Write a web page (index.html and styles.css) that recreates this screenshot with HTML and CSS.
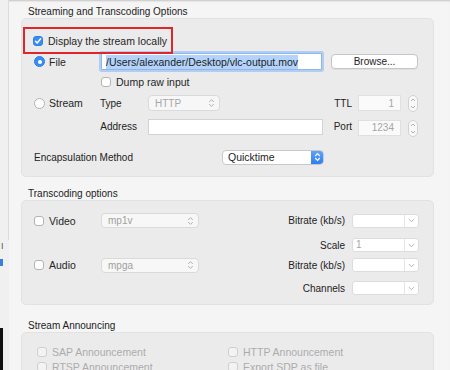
FILE: index.html
```html
<!DOCTYPE html>
<html lang="en">

<head>
  <meta charset="UTF-8">
  <title>Streaming and Transcoding Options</title>
  <link rel="stylesheet" href="styles.css">
</head>

<body>
  <div class="screen">
    <div class="side">
      <div class="side-top"></div>
      <span class="side-mark">I</span>
      <span class="side-blue"></span>
      <span class="side-dark"></span>
    </div>

    <div class="panel">
      <!-- Streaming -->
      <div class="group-title first">Streaming and Transcoding Options</div>
      <div class="group box-out">
        <div class="highlight">
          <span class="cb on"><svg width="8" height="8" viewBox="0 0 8 8"><path d="M1.5 4.2 L3.2 6 L6.6 1.8" fill="none" stroke="#fff" stroke-width="1.5" stroke-linecap="round" stroke-linejoin="round"/></svg></span>
          <span>Display the stream locally</span>
        </div>

        <div class="out-grid">
          <div class="choice"><span class="rb on"></span>File</div>
          <div class="field focus c23"><span class="sel">/Users/alexander/Desktop/vlc-output.mov</span></div>
          <div class="btn c46">Browse...</div>

          <div class="choice c23 dump"><span class="cb"></span>Dump raw input</div>

          <div class="choice c1"><span class="rb"></span>Stream</div>
          <div class="lbl">Type</div>
          <div class="popup off http">HTTP
            <svg class="updown" width="7" height="10" viewBox="0 0 7 10"><path d="M1.2 4 L3.5 1.6 L5.8 4 M1.2 6 L3.5 8.4 L5.8 6" fill="none" stroke="#b4b4b4" stroke-width="1"/></svg>
          </div>
          <div class="lbl right">TTL</div>
          <div class="field num off">1</div>
          <div class="stepper"><svg width="6" height="13" viewBox="0 0 6 13"><path d="M1 4 L3 2 L5 4 M1 9 L3 11 L5 9" fill="none" stroke="#a8a8a8" stroke-width="0.9"/></svg></div>

          <div class="lbl right addr c2">Address</div>
          <div class="field addr-field"></div>
          <div class="lbl right">Port</div>
          <div class="field num off port">1234</div>
          <div class="stepper port"><svg width="6" height="13" viewBox="0 0 6 13"><path d="M1 4 L3 2 L5 4 M1 9 L3 11 L5 9" fill="none" stroke="#a8a8a8" stroke-width="0.9"/></svg></div>

          <div class="lbl c12">Encapsulation Method</div>
          <div class="popup blue-pop">Quicktime
            <span class="pop-btn"><svg width="7" height="10" viewBox="0 0 7 10"><path d="M1.2 4 L3.5 1.6 L5.8 4 M1.2 6 L3.5 8.4 L5.8 6" fill="none" stroke="#fff" stroke-width="1.1"/></svg></span>
          </div>
        </div>
      </div>

      <!-- Transcoding -->
      <div class="group-title">Transcoding options</div>
      <div class="group box-trans">
        <div class="trans-grid">
          <div class="choice r1"><span class="cb"></span>Video</div>
          <div class="popup off codec r1">mp1v
            <svg class="updown" width="7" height="10" viewBox="0 0 7 10"><path d="M1.2 4 L3.5 1.6 L5.8 4 M1.2 6 L3.5 8.4 L5.8 6" fill="none" stroke="#b4b4b4" stroke-width="1"/></svg>
          </div>
          <div class="lbl right r1">Bitrate (kb/s)</div>
          <div class="combo r1"><span class="combo-text"></span><span class="combo-arr"><svg width="7" height="5" viewBox="0 0 7 5"><path d="M1 1.2 L3.5 3.7 L6 1.2" fill="none" stroke="#b0b0b0" stroke-width="1"/></svg></span></div>

          <div class="lbl right r2">Scale</div>
          <div class="combo r2"><span class="combo-text off">1</span><span class="combo-arr"><svg width="7" height="5" viewBox="0 0 7 5"><path d="M1 1.2 L3.5 3.7 L6 1.2" fill="none" stroke="#b0b0b0" stroke-width="1"/></svg></span></div>

          <div class="choice r3"><span class="cb"></span>Audio</div>
          <div class="popup off codec r3">mpga
            <svg class="updown" width="7" height="10" viewBox="0 0 7 10"><path d="M1.2 4 L3.5 1.6 L5.8 4 M1.2 6 L3.5 8.4 L5.8 6" fill="none" stroke="#b4b4b4" stroke-width="1"/></svg>
          </div>
          <div class="lbl right r3">Bitrate (kb/s)</div>
          <div class="combo r3"><span class="combo-text"></span><span class="combo-arr"><svg width="7" height="5" viewBox="0 0 7 5"><path d="M1 1.2 L3.5 3.7 L6 1.2" fill="none" stroke="#b0b0b0" stroke-width="1"/></svg></span></div>

          <div class="lbl right r4">Channels</div>
          <div class="combo r4"><span class="combo-text"></span><span class="combo-arr"><svg width="7" height="5" viewBox="0 0 7 5"><path d="M1 1.2 L3.5 3.7 L6 1.2" fill="none" stroke="#b0b0b0" stroke-width="1"/></svg></span></div>
        </div>
      </div>

      <!-- Announcing -->
      <div class="group-title ann">Stream Announcing</div>
      <div class="group box-ann">
        <div class="ann-grid">
          <div class="choice off"><span class="cb dim"></span>SAP Announcement</div>
          <div class="choice off"><span class="cb dim"></span>HTTP Announcement</div>
          <div class="choice off"><span class="cb dim"></span>RTSP Announcement</div>
          <div class="choice off"><span class="cb dim"></span>Export SDP as file</div>
        </div>
      </div>
    </div>
  </div>
</body>

</html>
```

FILE: styles.css
```css
/* macOS style options sheet */
* {
  box-sizing: border-box;
}

body {
  margin: 0;
  background-color: #f5f5f5;
  font-family: "Liberation Sans", Arial, sans-serif;
  font-size: 10px;
  color: #262626;
}

.screen {
  display: flex;
  height: 370px;
  overflow: hidden;
  box-shadow: inset 0 2px 2px -1px rgba(0, 0, 0, 0.2);
}

/* strip of the window behind */
.side {
  width: 9px;
  flex: none;
  display: flex;
  flex-direction: column;
  background-color: #f0f0f0;
}

.side-top {
  height: 240px;
  border-right: 1px solid #dcdcdc;
}

.side-mark {
  height: 12px;
  padding-left: 1px;
  font-size: 9px;
  line-height: 12px;
  color: #555;
}

.side-blue {
  width: 3px;
  height: 7px;
  margin-top: 7px;
  background-color: #3a7fe0;
}

.side-dark {
  width: 3px;
  height: 42px;
  margin-top: auto;
  background-color: #111;
}

.panel {
  width: 413px;
  margin-left: 12px;
  flex: none;
}

.group-title {
  height: 23px;
  padding-left: 7px;
  display: flex;
  align-items: flex-end;
  line-height: 13px;
  color: #222;
}

.group-title.first {
  height: 18px;
  align-items: flex-start;
  padding-top: 5px;
}

.group-title.ann {
  height: 27px;
}

.group {
  background-color: #ebebeb;
  border: 1px solid #e2e2e2;
  border-radius: 5px;
}

.box-out {
  height: 159px;
}

.box-trans {
  height: 105px;
}

.box-ann {
  height: 60px;
}

/* red annotation */
.highlight {
  width: 150px;
  height: 27px;
  margin: 8px 0 0 1px;
  border: 2px solid #e0252b;
  display: flex;
  align-items: center;
  gap: 5px;
  padding-left: 8px;
  white-space: nowrap;
  font-size: 10.5px;
  position: relative;
  z-index: 1;
}

.cb {
  width: 10px;
  height: 10px;
  flex: none;
  border: 1px solid #b3b3b3;
  border-radius: 3px;
  background-color: #fff;
  display: flex;
  align-items: center;
  justify-content: center;
}

.cb.on {
  background-color: #3a8bf1;
  border-color: #2f7fe6;
}

.cb.dim {
  border-color: #cfcfcf;
  background-color: #f3f3f3;
}

.rb {
  width: 11px;
  height: 11px;
  flex: none;
  border: 1px solid #b3b3b3;
  border-radius: 50%;
  background-color: #fff;
  display: flex;
  align-items: center;
  justify-content: center;
}

.rb.on {
  background-color: #3a8bf1;
  border-color: #2f7fe6;
}

.rb.on::after {
  content: "";
  width: 4px;
  height: 4px;
  border-radius: 50%;
  background-color: #fff;
}

.choice {
  display: flex;
  align-items: center;
  gap: 4px;
  padding-left: 1px;
  white-space: nowrap;
  font-size: 10.5px;
}

.choice .cb {
  margin-right: 1px;
}

.off {
  color: #a6a6a6;
}

/* streaming grid */
.out-grid {
  display: grid;
  grid-template-columns: 66px 49px 176px 34px 43px 17px;
  grid-template-rows: 19px 22px 20px 26px 36px;
  align-items: center;
  padding-left: 11px;
  margin-top: -2px;
}

.c1 {
  grid-column: 1;
}

.c2 {
  grid-column: 2;
}

.c23 {
  grid-column: 2 / 4;
}

.c46 {
  grid-column: 4 / 7;
}

.c12 {
  grid-column: 1 / 3;
}

.dump {
  padding-left: 2px;
}

.lbl {
  white-space: nowrap;
  color: #222;
}

.lbl.right {
  text-align: right;
  padding-right: 6px;
}

.lbl.addr {
  padding-right: 11px;
}

.out-grid .lbl:not(.right) {
  padding-left: 1px;
}

.field {
  height: 16px;
  background-color: #fff;
  border: 1px solid #d3d3d3;
  display: flex;
  align-items: center;
}

.field.focus {
  height: 17px;
  margin: 0 2px;
  border: 1px solid #8cb6ec;
  box-shadow: 0 0 0 2px #b2cdf2;
  padding-left: 4px;
  border-radius: 1px;
  font-size: 10.5px;
}

.sel {
  background-color: #b3d3fb;
  color: #1e1e1e;
  line-height: 14px;
}

.field.num {
  justify-content: flex-end;
  padding-right: 6px;
  border-color: #e0e0e0;
  background-color: #fafafa;
}

.field.port {
  margin-top: 3px;
}

.addr-field {
  width: 175px;
  margin-top: 2px;
}

.btn {
  height: 15px;
  margin-left: 7px;
  background-color: #fff;
  border: 1px solid #c6c6c6;
  border-radius: 4px;
  text-align: center;
  line-height: 13px;
  color: #222;
  box-shadow: 0 1px 0 rgba(0, 0, 0, 0.05);
}

.stepper {
  width: 10px;
  height: 17px;
  margin-left: 7px;
  border: 1px solid #d2d2d2;
  border-radius: 5px;
  background-color: #f8f8f8;
  display: flex;
  align-items: center;
  justify-content: center;
}

.stepper.port {
  margin-top: 4px;
}

.popup {
  height: 16px;
  display: flex;
  align-items: center;
  justify-content: space-between;
  background-color: #f7f7f7;
  border: 1px solid #dadada;
  border-radius: 4px;
  padding: 0 4px 0 6px;
}

.popup.http {
  width: 72px;
}

.blue-pop {
  width: 102px;
  height: 15px;
  margin-left: 74px;
  background-color: #fff;
  border-color: #c8c8c8;
  color: #1e1e1e;
  padding: 0 0 0 5px;
  font-size: 10.5px;
  overflow: hidden;
}

.pop-btn {
  width: 13px;
  height: 15px;
  margin-top: -1px;
  margin-right: -1px;
  border-radius: 0 4px 4px 0;
  background: linear-gradient(#66a8fa, #2f7ef1);
  display: flex;
  align-items: center;
  justify-content: center;
}

/* transcoding grid */
.trans-grid {
  display: grid;
  grid-template-columns: 68px 98px 1fr 67px;
  grid-template-rows: 23px 26px 14px 32px;
  align-items: center;
  padding: 8px 14px 0 11px;
}

.r1 { grid-row: 1; }
.r2 { grid-row: 2; }
.r3 { grid-row: 3; }
.r4 { grid-row: 4; }

.trans-grid .lbl.right {
  grid-column: 3;
  padding-right: 7px;
}

.trans-grid .combo {
  grid-column: 4;
}

.codec {
  height: 15px;
  grid-column: 2;
  color: #a0a0a0;
}

.combo {
  height: 14px;
  display: flex;
  background-color: #fff;
  border: 1px solid #dcdcdc;
  border-radius: 3px;
}

.combo-text {
  flex: 1;
  padding-left: 3px;
  line-height: 12px;
}

.combo-arr {
  width: 14px;
  border-left: 1px solid #e6e6e6;
  display: flex;
  align-items: center;
  justify-content: center;
}

/* announcing grid */
.ann-grid {
  display: grid;
  grid-template-columns: 191px 1fr;
  grid-auto-rows: 15px;
  align-items: center;
  padding: 11px 0 0 14px;
}

.ann-grid .choice {
  gap: 4px;
  color: #ababab;
}
```
